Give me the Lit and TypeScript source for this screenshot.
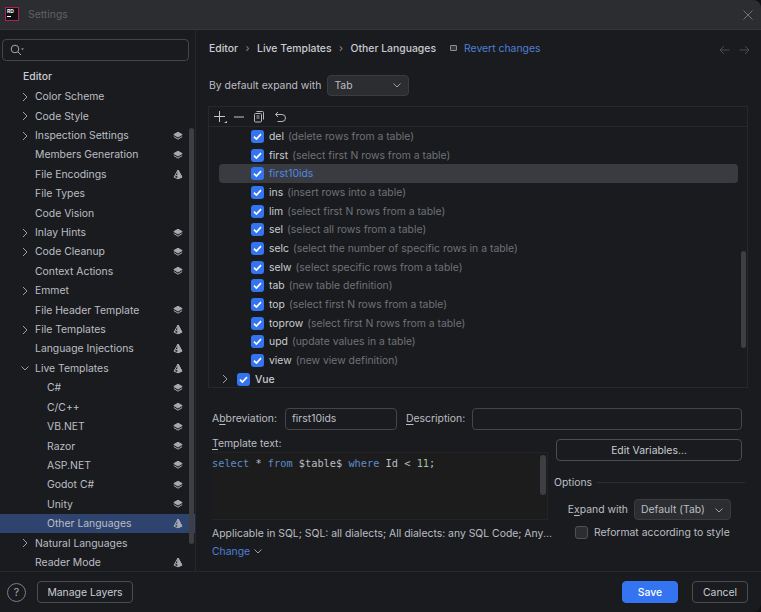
import { LitElement, html, css, svg, nothing } from 'lit';
import { customElement } from 'lit/decorators.js';

type NavRow = { label: string; depth: number; arrow?: '>' | 'v'; badge?: 'stack' | 'cone'; selected?: boolean };

const NAV: NavRow[] = [
  { label: 'Color Scheme', depth: 1, arrow: '>' },
  { label: 'Code Style', depth: 1, arrow: '>' },
  { label: 'Inspection Settings', depth: 1, arrow: '>', badge: 'stack' },
  { label: 'Members Generation', depth: 1, badge: 'stack' },
  { label: 'File Encodings', depth: 1, badge: 'cone' },
  { label: 'File Types', depth: 1 },
  { label: 'Code Vision', depth: 1 },
  { label: 'Inlay Hints', depth: 1, arrow: '>', badge: 'stack' },
  { label: 'Code Cleanup', depth: 1, arrow: '>', badge: 'stack' },
  { label: 'Context Actions', depth: 1, badge: 'stack' },
  { label: 'Emmet', depth: 1, arrow: '>' },
  { label: 'File Header Template', depth: 1, badge: 'stack' },
  { label: 'File Templates', depth: 1, arrow: '>', badge: 'cone' },
  { label: 'Language Injections', depth: 1, badge: 'cone' },
  { label: 'Live Templates', depth: 1, arrow: 'v', badge: 'cone' },
  { label: 'C#', depth: 2, badge: 'stack' },
  { label: 'C/C++', depth: 2, badge: 'stack' },
  { label: 'VB.NET', depth: 2, badge: 'stack' },
  { label: 'Razor', depth: 2, badge: 'stack' },
  { label: 'ASP.NET', depth: 2, badge: 'stack' },
  { label: 'Godot C#', depth: 2, badge: 'stack' },
  { label: 'Unity', depth: 2, badge: 'stack' },
  { label: 'Other Languages', depth: 2, badge: 'cone', selected: true },
  { label: 'Natural Languages', depth: 1, arrow: '>' },
  { label: 'Reader Mode', depth: 1, badge: 'cone' },
];

const TEMPLATES: [string, string, boolean?][] = [
  ['del', '(delete rows from a table)'],
  ['first', '(select first N rows from a table)'],
  ['first10ids', '', true],
  ['ins', '(insert rows into a table)'],
  ['lim', '(select first N rows from a table)'],
  ['sel', '(select all rows from a table)'],
  ['selc', '(select the number of specific rows in a table)'],
  ['selw', '(select specific rows from a table)'],
  ['tab', '(new table definition)'],
  ['top', '(select first N rows from a table)'],
  ['toprow', '(select first N rows from a table)'],
  ['upd', '(update values in a table)'],
  ['view', '(new view definition)'],
];

const chevronRight = html`<svg width="10" height="10" viewBox="0 0 10 10" fill="none" stroke="#9da0a8" stroke-width="1"><path d="M3 1l4 4-4 4"/></svg>`;
const chevronDown = html`<svg width="10" height="10" viewBox="0 0 10 10" fill="none" stroke="#9da0a8" stroke-width="1"><path d="M1.5 3.5L5 7l3.500-3.500"/></svg>`;

const stackIcon = svg`<svg width="10" height="10" viewBox="0 0 10 10" fill="none" stroke="#a6a9b0" stroke-width="1"><path d="M5 1.200L9.200 3.600 5 6 .8 3.600z" fill="#a6a9b0"/><path d="M.8 5.600L5 8.200l4.200-2.600"/></svg>`;
const coneIcon = svg`<svg width="10" height="11" viewBox="0 0 10 11" fill="none" stroke="#a6a9b0" stroke-width="1"><path d="M5 1L9 8.200 5 9.800 1 8.200z"/><path d="M5 1v8.800M1.400 7.400L5 6l3.600 1.400"/><path d="M5 1L8.800 8 5 9.600z" fill="#a6a9b0"/></svg>`;

const check = html`<span class="check"><svg width="13" height="13" viewBox="0 0 14 14" fill="none" stroke="#fff" stroke-width="1.800"><path d="M3.200 7.200l2.600 2.600 5-5.400"/></svg></span>`;

@customElement('app-root')
export class AppRoot extends LitElement {
  static styles = css`
    :host {
      display: block;
      width: 761px;
      height: 612px;
      background: #101113;
      font-family: Inter, 'Noto Sans', sans-serif;
      font-size: 10.4px;
      color: #bcbec4;
    }
    .window {
      height: 612px;
      box-sizing: border-box;
      display: flex;
      flex-direction: column;
      background: #1a1b1e;
      border-radius: 0 8px 8px 0;
      overflow: hidden;
    }
    .titlebar {
      flex: 0 0 29px;
      background: #2b2d30;
      border-bottom: 1px solid #34363a;
      display: flex;
      align-items: center;
      padding: 0 8px 0 5px;
      gap: 9px;
      color: #5f6266;
    }
    .logo {
      width: 11px;
      height: 12px;
      background: #111;
      border: 1px solid #b01e5c;
      color: #fff;
      font-size: 5px;
      font-weight: 700;
      line-height: 7px;
      padding-left: 1px;
      margin-bottom: 2px;
      overflow: hidden;
    }
    .logo i { display: block; width: 4px; height: 1px; background: #fff; margin-top: 1px; }
    .titlebar .close { margin-left: auto; }
    .body { flex: 1; display: flex; min-height: 0; }

    /* sidebar */
    .side {
      position: relative;
      flex: 0 0 195px;
      border-right: 1px solid #26282b;
      padding-top: 9px;
      overflow: hidden;
    }
    .search {
      margin: 0 6px 0 2px;
      height: 20px;
      border: 1px solid #43454a;
      border-radius: 4px;
      display: flex;
      align-items: center;
      padding-left: 7px;
    }
    .group { margin: 6px 0 0 23px; height: 19px; line-height: 19px; font-weight: 500; color: #c9ccd2; }
    .rows { margin-top: 1px; }
    .nav {
      height: 19.42px;
      display: flex;
      align-items: center;
      padding-right: 12px;
      white-space: nowrap;
    }
    .nav.selected { background: #2e436e; }
    .nav .arrow { width: 10px; display: flex; margin-left: 20px; margin-right: 5px; }
    .nav.d2 .label { margin-left: 12px; }
    .nav .badge { margin-left: auto; display: flex; }
    .sidebar-thumb {
      position: absolute;
      left: 189px;
      top: 98px;
      width: 5px;
      height: 416px;
      border-radius: 3px;
      background: #3d3f43;
    }

    /* right part */
    .main { flex: 1; min-width: 0; padding: 0 13px; display: flex; flex-direction: column; }
    .crumbs { display: flex; align-items: center; height: 18px; margin-top: 9px; font-weight: 500; color: #c9ccd2; }
    .crumbs .sep { width: 19px; text-align: center; color: #8c8f96; font-weight: 400; }
    .revert { display: flex; align-items: center; gap: 7px; margin-left: 14px; color: #4f7fd6; font-weight: 400; }
    .revert i { width: 5px; height: 4px; border: 1px solid #8b8e95; border-radius: 1px; background: #35373b; }
    .nav-arrows { margin-left: auto; display: flex; gap: 9px; margin-right: -2px; padding-top: 3px; }
    .expand { display: flex; align-items: center; gap: 6px; height: 22px; margin-top: 17px; }
    .combo {
      box-sizing: border-box;
      height: 21px;
      background: #2b2d30;
      border: 1px solid #3a3c40;
      border-radius: 4px;
      display: flex;
      align-items: center;
      justify-content: space-between;
      padding: 0 6px;
    }
    .tree {
      margin-top: 10px;
      margin-left: -1px;
      width: 540px;
      height: 282px;
      box-sizing: border-box;
      border: 1px solid #26282b;
      position: relative;
      overflow: hidden;
    }
    .tools { height: 19px; border-bottom: 1px solid #26282b; display: flex; align-items: center; gap: 5px; padding-left: 4px; }
    .tools svg { display: block; }
    .tools .copy { margin-left: 2px; }
    .tools .undo { margin-left: 4px; }
    .list { padding: 0 9px 0 10px; }
    .tpl { height: 18.68px; display: flex; align-items: center; padding-left: 32px; border-radius: 4px; white-space: nowrap; color: #c9ccd2; }
    .tpl.sel { background: #393b40; color: #4f8ae0; }
    .tpl .desc { color: #6f7278; margin-left: 4px; }
    .check {
      width: 13px;
      height: 13px;
      background: #3574f0;
      border-radius: 3px;
      display: flex;
      align-items: center;
      justify-content: center;
      margin-right: 5px;
      flex: none;
    }
    .vue { padding-left: 11px; font-weight: 500; }
    .vue .caret { display: flex; width: 10px; margin-right: 7px; }
    .list-thumb { position: absolute; left: 532px; top: 144px; width: 5px; height: 97px; border-radius: 3px; background: #3d3f43; }

    .abbr { display: flex; align-items: center; margin: 19px 0 0 3px; height: 23px; white-space: nowrap; }
    .field { box-sizing: border-box; height: 22px; border: 1px solid #43454a; border-radius: 4px; padding: 0 6px; display: flex; align-items: center; }
    .abbr .a { width: 64px; margin-right: 9px; }
    .abbr .d { width: 58px; margin: 0 8px 0 9px; }
    .abbr .first { width: 112px; }
    .abbr .second { width: 270px; }
    u { text-underline-offset: 2px; }
    .lower { display: flex; margin: 4px 0 0 3px; gap: 7px; }
    .left { width: 336px; flex: none; }
    .tt { height: 18px; line-height: 20px; }
    .editor {
      position: relative;
      box-sizing: border-box;
      height: 68px;
      background: #1c1c1d;
      border: 1px solid #222427;
      border-left: none;
      font-family: 'DejaVu Sans Mono', monospace;
      font-size: 10.3px;
      line-height: 16px;
      color: #bcbec4;
      padding-top: 2px;
      white-space: pre;
    }
    .kw { color: #5c8dc9; }
    .num { color: #a8c0a0; }
    .editor-thumb { position: absolute; right: 1px; top: 2px; width: 6px; height: 40px; border-radius: 3px; background: #3d3f43; }
    .applicable { margin-top: 5px; height: 18px; line-height: 18px; white-space: nowrap; }
    .change { display: flex; align-items: center; gap: 3px; color: #4f7fd6; height: 14px; margin-top: 1px; }
    .right { flex: 1; min-width: 0; }
    .btn {
      box-sizing: border-box;
      height: 22px;
      border: 1px solid #4a4c51;
      border-radius: 4px;
      display: flex;
      align-items: center;
      justify-content: center;
      color: #c9ccd2;
    }
    .edit { margin: 5px 6px 0 1px; }
    .options { display: flex; align-items: center; gap: 5px; margin-top: 13px; margin-right: 3px; margin-left: -1px; height: 16px; }
    .options hr { flex: 1; border: none; border-top: 1px solid #2c2e32; margin: 0; }
    .exp { display: flex; align-items: center; justify-content: flex-end; gap: 6px; margin-top: 9px; margin-right: 17px; }
    .reformat { display: flex; align-items: center; gap: 6px; margin-top: 5px; margin-left: 20px; height: 14px; white-space: nowrap; }
    .box { box-sizing: border-box; width: 13px; height: 13px; background: #2b2d30; border: 1px solid #4e5157; border-radius: 3px; }

    .footer {
      flex: 0 0 40px;
      border-top: 1px solid #26282b;
      display: flex;
      align-items: center;
      padding: 0 13px 0 7px;
    }
    .help { width: 17px; height: 17px; border: 1px solid #7a7d83; border-radius: 50%; display: flex; align-items: center; justify-content: center; font-size: 10.5px; color: #a6a9b0; margin-right: 11px; }
    .layers { width: 96px; }
    .save { width: 56px; margin-left: auto; background: #3574f0; border-color: #3574f0; color: #fff; font-weight: 500; }
    .cancel { width: 56px; margin-left: 14px; }
  `;

  render() {
    return html`
      <div class="window">
        <div class="titlebar">
          <div class="logo">RD<i></i></div>
          <span>Settings</span>
          <svg class="close" width="10" height="10" viewBox="0 0 10 10" stroke="#6f7277" stroke-width="1"><path d="M.5.5l9 9M9.500.5l-9 9"/></svg>
        </div>
        <div class="body">
          ${this.renderSide()}
          ${this.renderMain()}
        </div>
        <div class="footer">
          <div class="help">?</div>
          <div class="btn layers">Manage Layers</div>
          <div class="btn save">Save</div>
          <div class="btn cancel">Cancel</div>
        </div>
      </div>
    `;
  }

  renderSide() {
    return html`
      <div class="side">
        <div class="search">
          <svg width="15" height="12" viewBox="0 0 15 12" fill="none" stroke="#a6a9b0" stroke-width="1"><circle cx="5" cy="5" r="3.800"/><path d="M8 8l3 3"/><path d="M11 4.500h3L12.500 6z" fill="#a6a9b0" stroke="none"/></svg>
        </div>
        <div class="group">Editor</div>
        <div class="rows">
          ${NAV.map(
            (r) => html`
              <div class="nav d${r.depth} ${r.selected ? 'selected' : ''}">
                <span class="arrow">${r.arrow === '>' ? chevronRight : r.arrow === 'v' ? chevronDown : nothing}</span>
                <span class="label">${r.label}</span>
                ${r.badge ? html`<span class="badge">${r.badge === 'stack' ? stackIcon : coneIcon}</span>` : nothing}
              </div>
            `
          )}
        </div>
        <div class="sidebar-thumb"></div>
      </div>
    `;
  }

  renderMain() {
    return html`
      <div class="main">
        <div class="crumbs">
          Editor<span class="sep">›</span>Live Templates<span class="sep">›</span>Other Languages
          <span class="revert"><i></i>Revert changes</span>
          <span class="nav-arrows">
            <svg width="11" height="10" viewBox="0 0 11 10" fill="none" stroke="#4a4c50"><path d="M10.500 5H1M5 1L1 5l4 4"/></svg>
            <svg width="11" height="10" viewBox="0 0 11 10" fill="none" stroke="#4a4c50"><path d="M.5 5H10M6 1l4 4-4 4"/></svg>
          </span>
        </div>
        <div class="expand">
          <span>By default expand with</span>
          <div class="combo" style="width:82px">Tab ${chevronDown}</div>
        </div>
        <div class="tree">
          <div class="tools">
            <svg width="15" height="14" viewBox="0 0 15 14" fill="none" stroke="#c3c6cc"><path d="M6.500 1v11M1 6.500h11"/><path d="M11 13h3v-2z" fill="#c3c6cc" stroke="none"/></svg>
            <svg width="12" height="14" viewBox="0 0 12 14" fill="none" stroke="#c3c6cc"><path d="M1 7h10"/></svg>
            <svg class="copy" width="13" height="14" viewBox="0 0 13 14" fill="none" stroke="#b3b6bc"><rect x="2.500" y="3.500" width="7" height="8.500" rx="1"/><path d="M4.500 1.500h6a1 1 0 0 1 1 1v7M4.500 6h3M4.500 8h3"/></svg>
            <svg class="undo" width="13" height="14" viewBox="0 0 13 14" fill="none" stroke="#b3b6bc"><path d="M4 2L1.500 4.500 4 7M1.500 4.500H8a3.500 3.500 0 0 1 0 7H3.500"/></svg>
          </div>
          <div class="list">
            ${TEMPLATES.map(
              ([name, desc, sel]) => html`
                <div class="tpl ${sel ? 'sel' : ''}">
                  ${check}<span>${name}</span>${desc ? html`<span class="desc">${desc}</span>` : nothing}
                </div>
              `
            )}
          </div>
          <div class="tpl vue"><span class="caret">${chevronRight}</span>${check}Vue</div>
          <div class="list-thumb"></div>
        </div>
        <div class="abbr">
          <span class="a">A<u>b</u>breviation:</span>
          <div class="field first">first10ids</div>
          <span class="d"><u>D</u>escription:</span>
          <div class="field second"></div>
        </div>
        <div class="lower">
          <div class="left">
            <div class="tt"><u>T</u>emplate text:</div>
            <div class="editor"><span class="kw">select</span> * <span class="kw">from</span> $table$ <span class="kw">where</span> Id &lt; <span class="num">11</span>;<div class="editor-thumb"></div></div>
            <div class="applicable">Applicable in SQL; SQL: all dialects; All dialects: any SQL Code; Any...</div>
            <div class="change">Change ${chevronDown}</div>
          </div>
          <div class="right">
            <div class="btn edit">Edit Variables...</div>
            <div class="options">Options<hr /></div>
            <div class="exp">
              <span>E<u>x</u>pand with</span>
              <div class="combo" style="width:97px">Default (Tab) ${chevronDown}</div>
            </div>
            <div class="reformat"><span class="box"></span>Reformat according to style</div>
          </div>
        </div>
      </div>
    `;
  }
}
